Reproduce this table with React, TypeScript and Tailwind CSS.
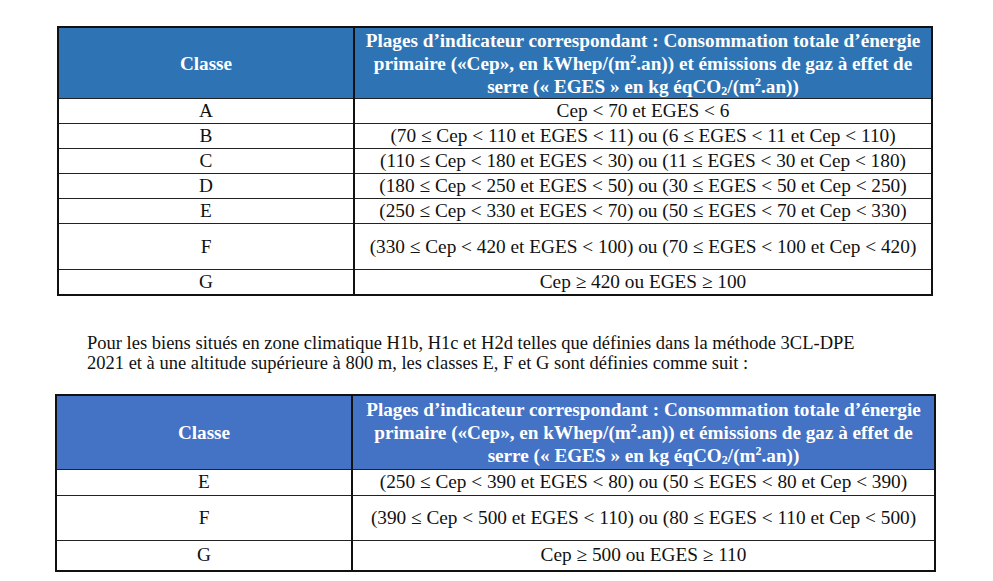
import React from "react";

type Row = { cls: string; range: string; h: string };

const rowsMain: Row[] = [
  { cls: "A", range: "Cep < 70 et EGES < 6", h: "h-[25px]" },
  { cls: "B", range: "(70 ≤ Cep < 110 et EGES < 11) ou (6 ≤ EGES < 11 et Cep < 110)", h: "h-[25px]" },
  { cls: "C", range: "(110 ≤ Cep < 180 et EGES < 30) ou (11 ≤ EGES < 30 et Cep < 180)", h: "h-[25px]" },
  { cls: "D", range: "(180 ≤ Cep < 250 et EGES < 50) ou (30 ≤ EGES < 50 et Cep < 250)", h: "h-[25px]" },
  { cls: "E", range: "(250 ≤ Cep < 330 et EGES < 70) ou (50 ≤ EGES < 70 et Cep < 330)", h: "h-[25px]" },
  { cls: "F", range: "(330 ≤ Cep < 420 et EGES < 100) ou (70 ≤ EGES < 100 et Cep < 420)", h: "h-[46px]" },
  { cls: "G", range: "Cep ≥ 420 ou EGES ≥ 100", h: "h-[25px]" },
];

const rowsAltitude: Row[] = [
  { cls: "E", range: "(250 ≤ Cep < 390 et EGES < 80) ou (50 ≤ EGES < 80 et Cep < 390)", h: "h-[26px]" },
  { cls: "F", range: "(390 ≤ Cep < 500 et EGES < 110) ou (80 ≤ EGES < 110 et Cep < 500)", h: "h-[45px]" },
  { cls: "G", range: "Cep ≥ 500 ou EGES ≥ 110", h: "h-[31px]" },
];

function HeaderText() {
  return (
    <>
      Plages d’indicateur correspondant : Consommation totale d’énergie
      <br />
      primaire («Cep», en kWhep/(m<sup className="text-[12px] -top-[7px]">2</sup>.an)) et émissions de gaz à effet de
      <br />
      serre (« EGES » en kg éqCO<sub className="text-[12px] top-[2px]">2</sub>/(m<sup className="text-[12px] -top-[7px]">2</sup>.an))
    </>
  );
}

function DpeTable({
  rows,
  headBg,
  headPad,
  className,
}: {
  rows: Row[];
  headBg: string;
  headPad: string;
  className: string;
}) {
  return (
    <table className={`border-collapse border-2 border-[#111] table-fixed ${className}`}>
      <colgroup>
        <col className="w-[296px]" />
        <col />
      </colgroup>
      <thead>
        <tr className={`${headBg} text-white text-[19.2px] leading-[23px]`}>
          <th className={`border-r-2 border-[#111] font-bold ${headPad}`}>Classe</th>
          <th className={`font-bold ${headPad}`}>
            <HeaderText />
          </th>
        </tr>
      </thead>
      <tbody className="text-[19.3px] text-[#111]">
        {rows.map((r) => (
          <tr key={r.cls} className={`border-t border-[#222] ${r.h}`}>
            <td className="border-r-2 border-[#111] text-center align-middle leading-[20px]">{r.cls}</td>
            <td className="text-center align-middle leading-[20px]">{r.range}</td>
          </tr>
        ))}
      </tbody>
    </table>
  );
}

export default function App() {
  return (
    <div className="w-[993px] h-[581px] bg-white overflow-hidden pt-[26px] [font-family:'Liberation_Serif','Times_New_Roman',serif]">
      <DpeTable rows={rowsMain} headBg="bg-[#2E74B5]" headPad="pt-[1px] pb-0" className="ml-[57px] w-[876px]" />
      <p className="ml-[87px] mt-[37px] text-[18.5px] leading-[20px] text-[#111]">
        Pour les biens situés en zone climatique H1b, H1c et H2d telles que définies dans la méthode 3CL-DPE
        <br />
        2021 et à une altitude supérieure à 800 m, les classes E, F et G sont définies comme suit :
      </p>
      <DpeTable
        rows={rowsAltitude}
        headBg="bg-[#4472C4]"
        headPad="pt-[2px] pb-[2px]"
        className="ml-[55px] mt-[21px] w-[881px]"
      />
    </div>
  );
}
